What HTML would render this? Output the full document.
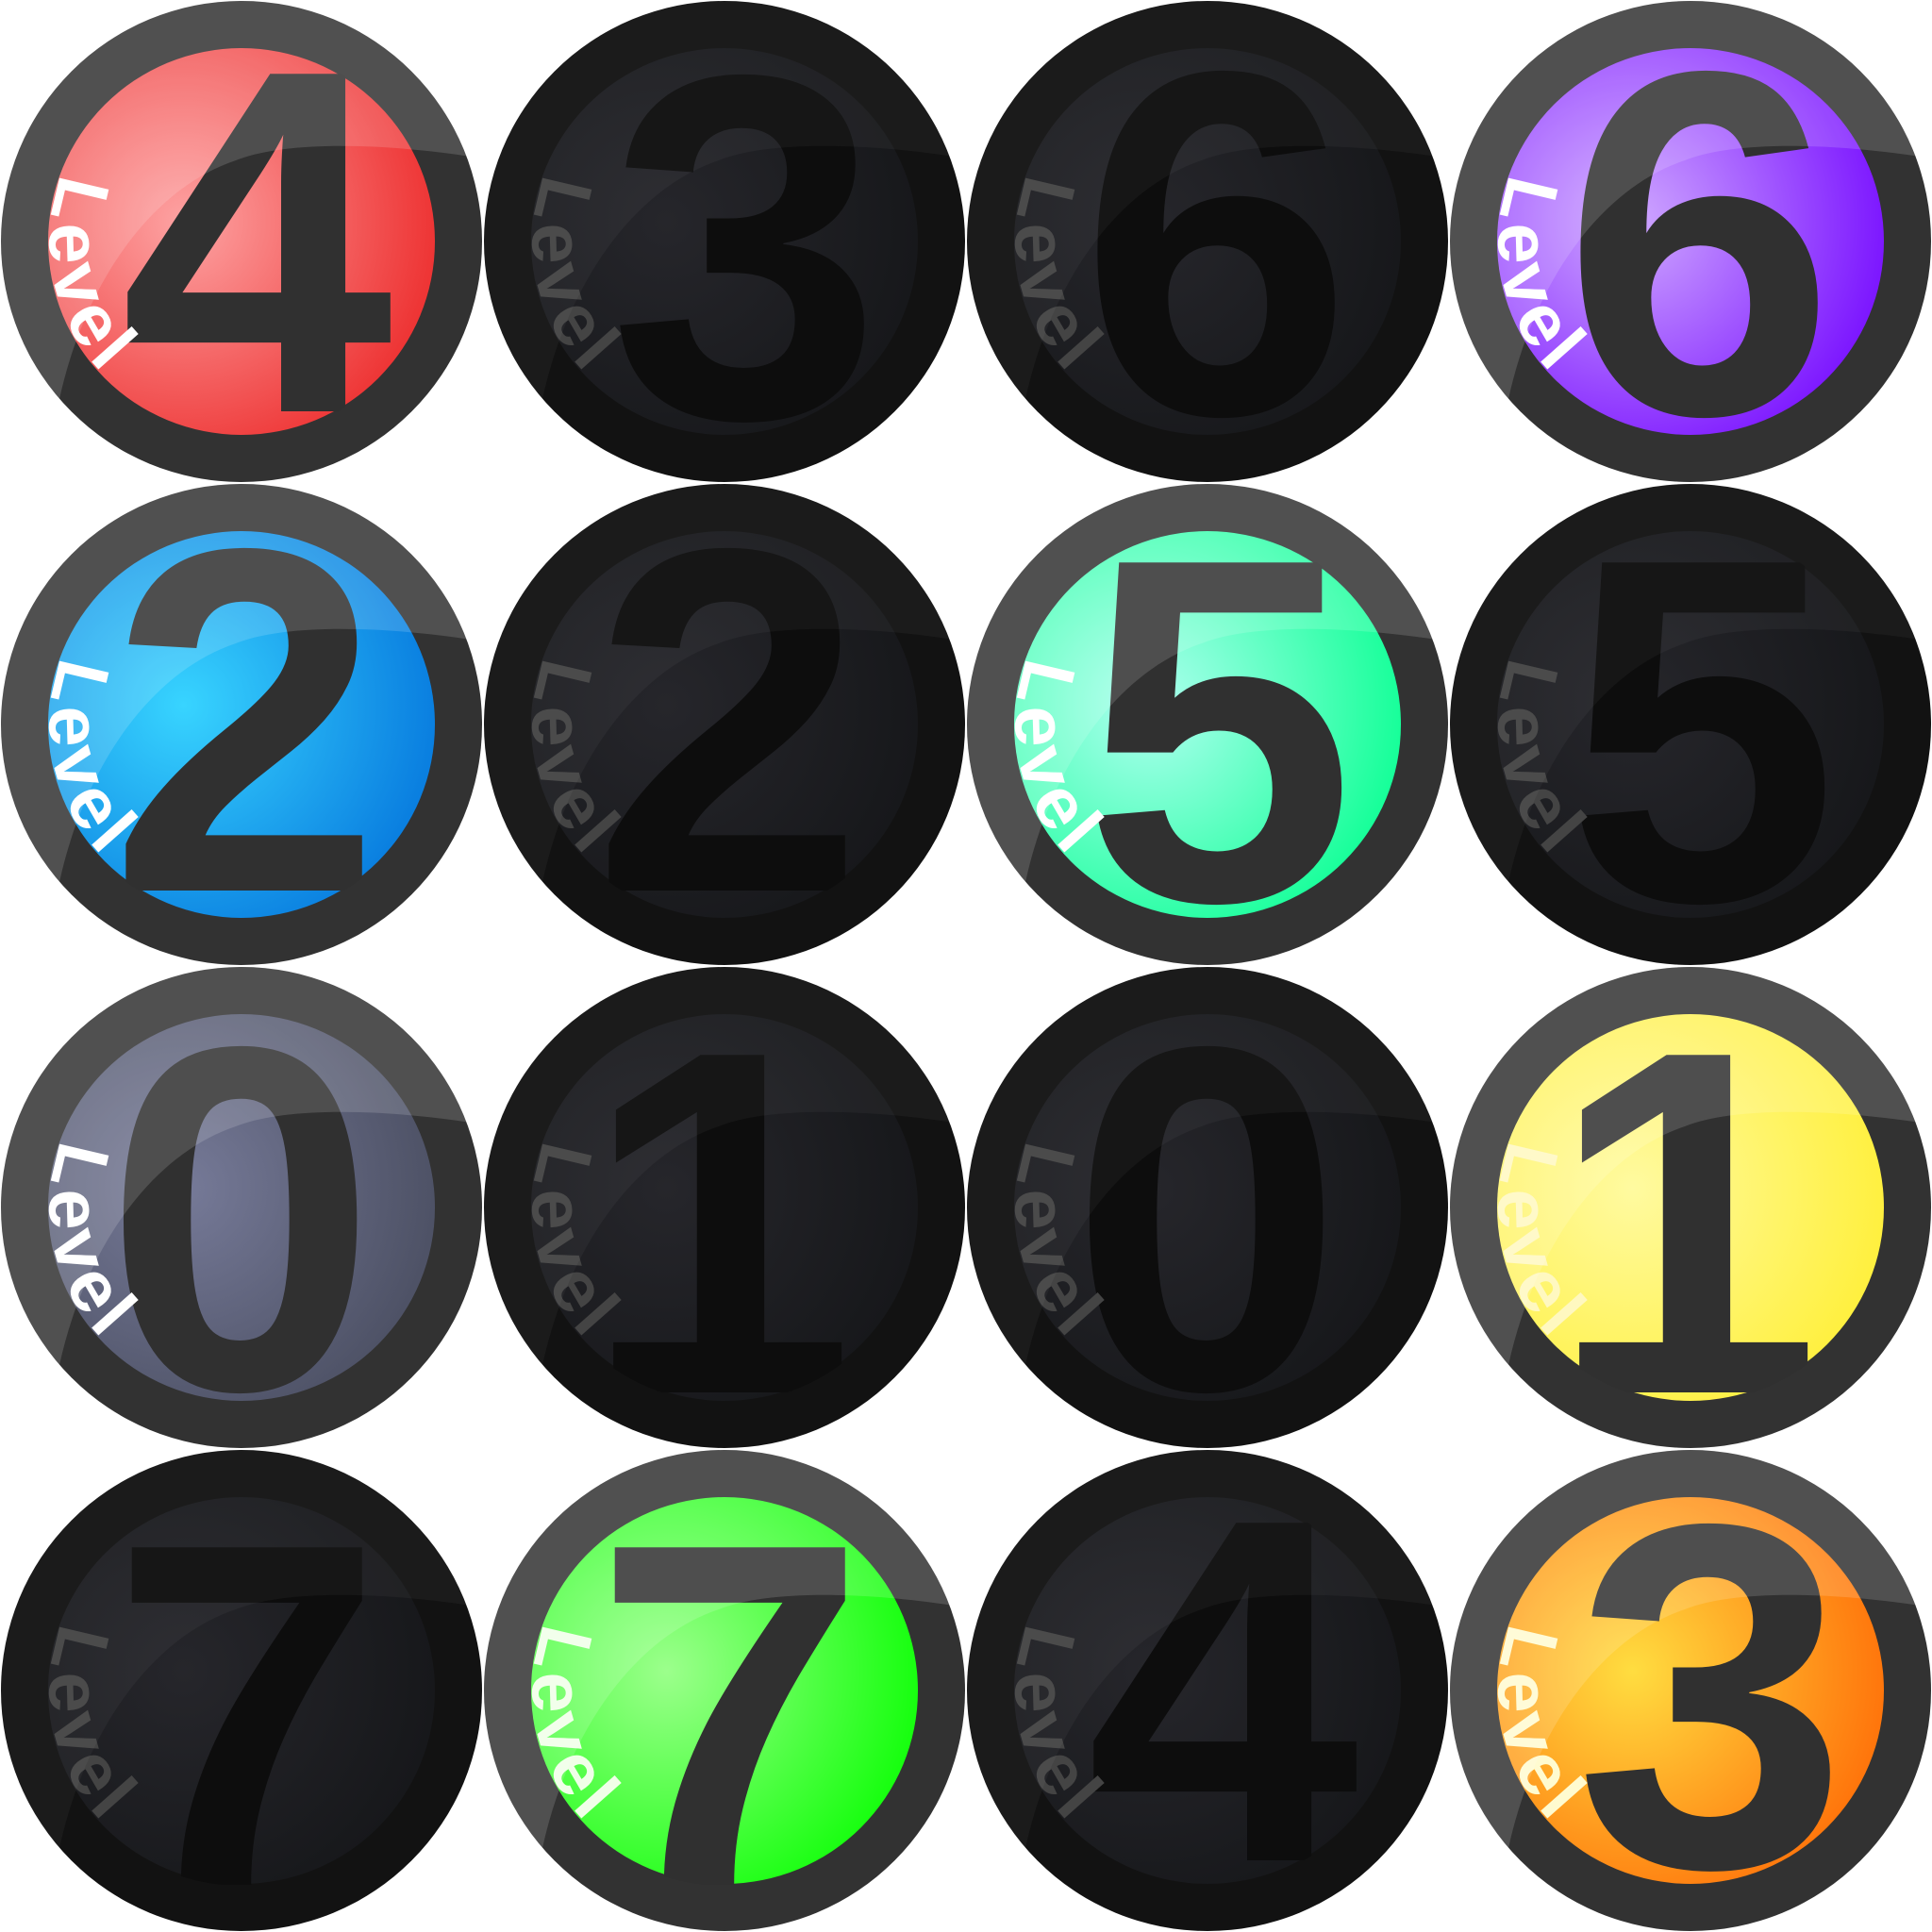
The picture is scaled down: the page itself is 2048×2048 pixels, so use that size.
<!DOCTYPE html>
<html><head><meta charset="utf-8"><style>
html,body{margin:0;padding:0;background:#fff;width:2048px;height:2048px;overflow:hidden}
svg{display:block}
.d{font-family:"Liberation Sans",sans-serif;font-weight:bold;font-size:520px;text-anchor:middle}
.lv{font-family:"Liberation Sans",sans-serif;font-weight:bold;font-size:78px;letter-spacing:7px}
</style></head><body>
<svg width="2048" height="2048" viewBox="0 0 2048 2048" xmlns="http://www.w3.org/2000/svg">
<defs>
<clipPath id="cc"><circle cx="256" cy="256" r="255"/></clipPath>
<clipPath id="ci"><circle cx="256" cy="256" r="207"/></clipPath>
<path id="arc" d="M 66 184 A 202 202 0 0 0 160 435"/>
<radialGradient id="gR" cx="0.35" cy="0.45" r="0.65"><stop offset="0" stop-color="#fda3a3"/><stop offset="1" stop-color="#ee3535"/></radialGradient>
<radialGradient id="gP" cx="0.35" cy="0.45" r="0.65"><stop offset="0" stop-color="#cfa8ff"/><stop offset="1" stop-color="#7d18ff"/></radialGradient>
<radialGradient id="gB" cx="0.35" cy="0.45" r="0.65"><stop offset="0" stop-color="#38d4ff"/><stop offset="1" stop-color="#0a7fe0"/></radialGradient>
<radialGradient id="gG" cx="0.35" cy="0.45" r="0.65"><stop offset="0" stop-color="#b0fff0"/><stop offset="1" stop-color="#18ff9a"/></radialGradient>
<radialGradient id="gS" cx="0.35" cy="0.45" r="0.65"><stop offset="0" stop-color="#767a98"/><stop offset="1" stop-color="#4e5266"/></radialGradient>
<radialGradient id="gY" cx="0.35" cy="0.45" r="0.65"><stop offset="0" stop-color="#fffaa0"/><stop offset="1" stop-color="#fff040"/></radialGradient>
<radialGradient id="gL" cx="0.35" cy="0.45" r="0.65"><stop offset="0" stop-color="#9cff8c"/><stop offset="1" stop-color="#18ff10"/></radialGradient>
<radialGradient id="gO" cx="0.35" cy="0.45" r="0.65"><stop offset="0" stop-color="#ffdd40"/><stop offset="1" stop-color="#ff760c"/></radialGradient>
<radialGradient id="gD" cx="0.35" cy="0.45" r="0.65"><stop offset="0" stop-color="#26262b"/><stop offset="1" stop-color="#17181b"/></radialGradient>
<path id="gl" d="M0 0 H512 V168 C400 150 300 150 250 170 C160 200 90 300 63 423 L0 423 Z"/>
</defs>

<g transform="translate(0,0)"><circle cx="256" cy="256" r="255" fill="#323232"/><circle cx="256" cy="256" r="205" fill="url(#gR)"/><text class="d" x="272" y="436" fill="#303030" clip-path="url(#ci)">4</text><text class="lv" fill="#fff"><textPath href="#arc">Level</textPath></text><use href="#gl" fill="#fff" opacity="0.15" clip-path="url(#cc)"/></g>
<g transform="translate(512,0)"><circle cx="256" cy="256" r="255" fill="#121212"/><circle cx="256" cy="256" r="205" fill="url(#gD)"/><text class="d" x="278" y="442" fill="#0d0d0d" clip-path="url(#ci)">3</text><text class="lv" fill="#444"><textPath href="#arc">Level</textPath></text><use href="#gl" fill="#fff" opacity="0.04" clip-path="url(#cc)"/></g>
<g transform="translate(1024,0)"><circle cx="256" cy="256" r="255" fill="#121212"/><circle cx="256" cy="256" r="205" fill="url(#gD)"/><text class="d" x="265" y="438" fill="#0d0d0d" clip-path="url(#ci)">6</text><text class="lv" fill="#444"><textPath href="#arc">Level</textPath></text><use href="#gl" fill="#fff" opacity="0.04" clip-path="url(#cc)"/></g>
<g transform="translate(1536,0)"><circle cx="256" cy="256" r="255" fill="#323232"/><circle cx="256" cy="256" r="205" fill="url(#gP)"/><text class="d" x="265" y="438" fill="#303030" clip-path="url(#ci)">6</text><text class="lv" fill="#fff"><textPath href="#arc">Level</textPath></text><use href="#gl" fill="#fff" opacity="0.15" clip-path="url(#cc)"/></g>

<g transform="translate(0,512)"><circle cx="256" cy="256" r="255" fill="#323232"/><circle cx="256" cy="256" r="205" fill="url(#gB)"/><text class="d" x="260" y="432" fill="#303030" clip-path="url(#ci)">2</text><text class="lv" fill="#fff"><textPath href="#arc">Level</textPath></text><use href="#gl" fill="#fff" opacity="0.15" clip-path="url(#cc)"/></g>
<g transform="translate(512,512)"><circle cx="256" cy="256" r="255" fill="#121212"/><circle cx="256" cy="256" r="205" fill="url(#gD)"/><text class="d" x="260" y="432" fill="#0d0d0d" clip-path="url(#ci)">2</text><text class="lv" fill="#444"><textPath href="#arc">Level</textPath></text><use href="#gl" fill="#fff" opacity="0.04" clip-path="url(#cc)"/></g>
<g transform="translate(1024,512)"><circle cx="256" cy="256" r="255" fill="#323232"/><circle cx="256" cy="256" r="205" fill="url(#gG)"/><text class="d" x="268" y="442" fill="#303030" clip-path="url(#ci)">5</text><text class="lv" fill="#fff"><textPath href="#arc">Level</textPath></text><use href="#gl" fill="#fff" opacity="0.15" clip-path="url(#cc)"/></g>
<g transform="translate(1536,512)"><circle cx="256" cy="256" r="255" fill="#121212"/><circle cx="256" cy="256" r="205" fill="url(#gD)"/><text class="d" x="268" y="442" fill="#0d0d0d" clip-path="url(#ci)">5</text><text class="lv" fill="#444"><textPath href="#arc">Level</textPath></text><use href="#gl" fill="#fff" opacity="0.04" clip-path="url(#cc)"/></g>

<g transform="translate(0,1024)"><circle cx="256" cy="256" r="255" fill="#323232"/><circle cx="256" cy="256" r="205" fill="url(#gS)"/><text class="d" x="255" y="448" fill="#303030" clip-path="url(#ci)">0</text><text class="lv" fill="#fff"><textPath href="#arc">Level</textPath></text><use href="#gl" fill="#fff" opacity="0.15" clip-path="url(#cc)"/></g>
<g transform="translate(512,1024)"><circle cx="256" cy="256" r="255" fill="#121212"/><circle cx="256" cy="256" r="205" fill="url(#gD)"/><text class="d" x="250" y="452" fill="#0d0d0d" clip-path="url(#ci)">1</text><text class="lv" fill="#444"><textPath href="#arc">Level</textPath></text><use href="#gl" fill="#fff" opacity="0.04" clip-path="url(#cc)"/></g>
<g transform="translate(1024,1024)"><circle cx="256" cy="256" r="255" fill="#121212"/><circle cx="256" cy="256" r="205" fill="url(#gD)"/><text class="d" x="255" y="448" fill="#0d0d0d" clip-path="url(#ci)">0</text><text class="lv" fill="#444"><textPath href="#arc">Level</textPath></text><use href="#gl" fill="#fff" opacity="0.04" clip-path="url(#cc)"/></g>
<g transform="translate(1536,1024)"><circle cx="256" cy="256" r="255" fill="#323232"/><circle cx="256" cy="256" r="205" fill="url(#gY)"/><text class="d" x="250" y="452" fill="#303030" clip-path="url(#ci)">1</text><text class="lv" fill="#fff8c0"><textPath href="#arc">Level</textPath></text><use href="#gl" fill="#fff" opacity="0.15" clip-path="url(#cc)"/></g>

<g transform="translate(0,1536)"><circle cx="256" cy="256" r="255" fill="#121212"/><circle cx="256" cy="256" r="205" fill="url(#gD)"/><text class="d" x="262" y="462" fill="#0d0d0d" clip-path="url(#ci)">7</text><text class="lv" fill="#444"><textPath href="#arc">Level</textPath></text><use href="#gl" fill="#fff" opacity="0.04" clip-path="url(#cc)"/></g>
<g transform="translate(512,1536)"><circle cx="256" cy="256" r="255" fill="#323232"/><circle cx="256" cy="256" r="205" fill="url(#gL)"/><text class="d" x="262" y="462" fill="#303030" clip-path="url(#ci)">7</text><text class="lv" fill="#f0ffe8"><textPath href="#arc">Level</textPath></text><use href="#gl" fill="#fff" opacity="0.15" clip-path="url(#cc)"/></g>
<g transform="translate(1024,1536)"><circle cx="256" cy="256" r="255" fill="#121212"/><circle cx="256" cy="256" r="205" fill="url(#gD)"/><text class="d" x="272" y="436" fill="#0d0d0d" clip-path="url(#ci)">4</text><text class="lv" fill="#444"><textPath href="#arc">Level</textPath></text><use href="#gl" fill="#fff" opacity="0.04" clip-path="url(#cc)"/></g>
<g transform="translate(1536,1536)"><circle cx="256" cy="256" r="255" fill="#323232"/><circle cx="256" cy="256" r="205" fill="url(#gO)"/><text class="d" x="278" y="442" fill="#303030" clip-path="url(#ci)">3</text><text class="lv" fill="#fffbd0"><textPath href="#arc">Level</textPath></text><use href="#gl" fill="#fff" opacity="0.15" clip-path="url(#cc)"/></g>
</svg>
</body></html>
